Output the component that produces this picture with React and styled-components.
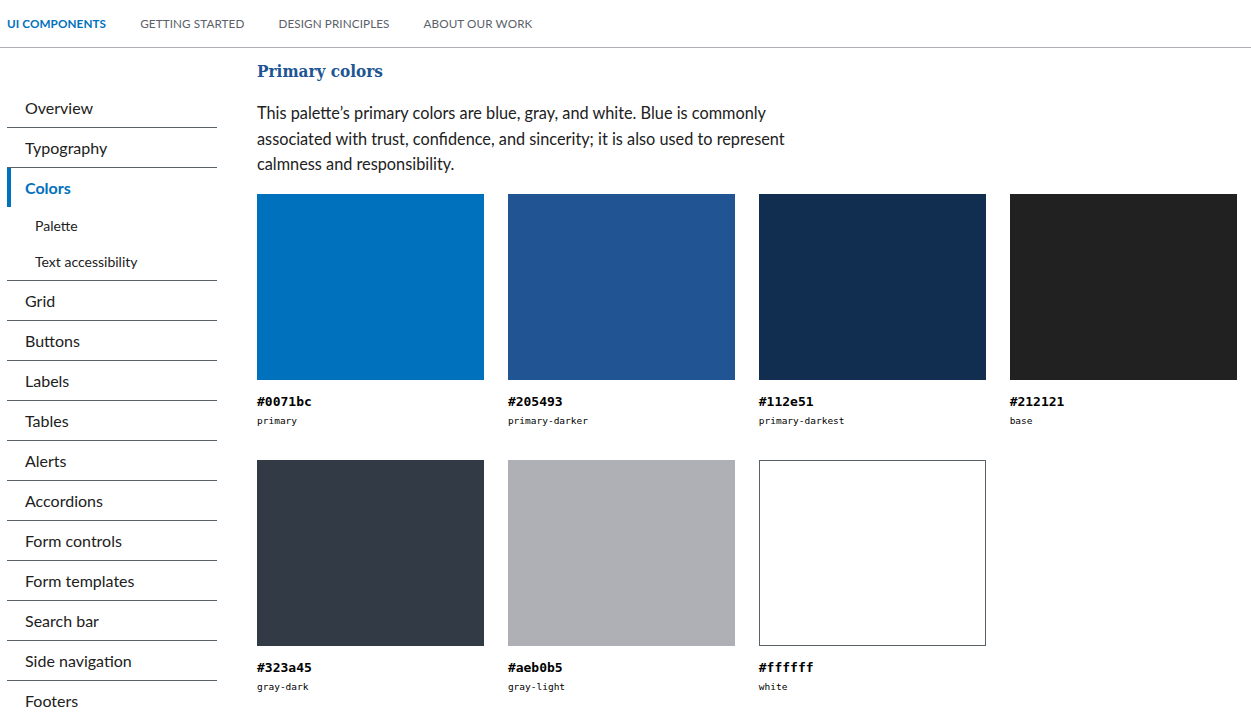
import React from "react";
import styled, { createGlobalStyle } from "styled-components";

const GlobalStyle = createGlobalStyle`
  * { box-sizing: border-box; }
  body {
    margin: 0;
    background: #fff;
    font-family: Lato, "Noto Sans", sans-serif;
    color: #212121;
  }
`;

const navLinks = ["UI COMPONENTS", "GETTING STARTED", "DESIGN PRINCIPLES", "ABOUT OUR WORK"];

const sideItems = [
    { label: "Overview" },
    { label: "Typography" },
    { label: "Colors", active: true, children: ["Palette", "Text accessibility"] },
    { label: "Grid" },
    { label: "Buttons" },
    { label: "Labels" },
    { label: "Tables" },
    { label: "Alerts" },
    { label: "Accordions" },
    { label: "Form controls" },
    { label: "Form templates" },
    { label: "Search bar" },
    { label: "Side navigation" },
    { label: "Footers" },
];

const swatches = [
    { hex: "#0071bc", name: "primary" },
    { hex: "#205493", name: "primary-darker" },
    { hex: "#112e51", name: "primary-darkest" },
    { hex: "#212121", name: "base" },
    { hex: "#323a45", name: "gray-dark" },
    { hex: "#aeb0b5", name: "gray-light" },
    { hex: "#ffffff", name: "white", outlined: true },
];

function App() {
    return (
        <>
            <GlobalStyle />
            <TopNav>
                {navLinks.map((link, i) => (
                    <NavLink key={link} $active={i === 0}>{link}</NavLink>
                ))}
            </TopNav>
            <Page>
                <SideNav>
                    {sideItems.map((item) => (
                        <SideItem key={item.label}>
                            <SideLink $active={item.active}>{item.label}</SideLink>
                            {item.children && (
                                <SubList>
                                    {item.children.map((c) => (
                                        <SubLink key={c}>{c}</SubLink>
                                    ))}
                                </SubList>
                            )}
                        </SideItem>
                    ))}
                </SideNav>
                <Main>
                    <Heading>Primary colors</Heading>
                    <Intro>
                        This palette’s primary colors are blue, gray, and white. Blue is commonly
                        associated with trust, confidence, and sincerity; it is also used to represent
                        calmness and responsibility.
                    </Intro>
                    <SwatchGrid>
                        {swatches.map((s) => (
                            <Swatch key={s.hex}>
                                <Chip $color={s.hex} $outlined={s.outlined} />
                                <Hex>{s.hex}</Hex>
                                <Name>{s.name}</Name>
                            </Swatch>
                        ))}
                    </SwatchGrid>
                </Main>
            </Page>
        </>
    );
}

const TopNav = styled.nav`
  height: 48px;
  display: flex;
  align-items: center;
  gap: 34px;
  padding: 0 7px 1px;
  border-bottom: 1px solid #aeb0b5;
`;

const NavLink = styled.a`
  font-family: Lato, "Noto Sans", sans-serif;
  font-size: 11.7px;
  font-weight: ${(p) => (p.$active ? 700 : 400)};
  color: ${(p) => (p.$active ? "#0071bc" : "#5b616b")};
  letter-spacing: 0.1px;
  cursor: pointer;
`;

const Page = styled.div`
  display: flex;
  gap: 40px;
  padding-left: 7px;
`;

const SideNav = styled.ul`
  list-style: none;
  margin: 40px 0 0;
  padding: 0;
  width: 210px;
  flex-shrink: 0;
`;

const SideItem = styled.li`
  border-top: 1px solid #5b616b;
  &:first-child { border-top: none; }
`;

const SideLink = styled.a`
  display: block;
  height: 39px;
  line-height: 40px;
  padding-left: ${(p) => (p.$active ? "14px" : "18px")};
  border-left: ${(p) => (p.$active ? "4px solid #0071bc" : "none")};
  font-size: 16px;
  font-weight: ${(p) => (p.$active ? 700 : 400)};
  color: ${(p) => (p.$active ? "#0071bc" : "#212121")};
`;

const SubList = styled.div`
  display: flex;
  flex-direction: column;
  padding-bottom: 1px;
`;

const SubLink = styled.a`
  display: block;
  height: 36px;
  line-height: 37px;
  padding-left: 28px;
  font-size: 14px;
  color: #212121;
`;

const Main = styled.main`
  width: 980px;
  padding-top: 11px;
`;

const Heading = styled.h2`
  margin: 0;
  font-family: "DejaVu Serif Condensed", "DejaVu Serif", serif;
  font-size: 17px;
  font-weight: 700;
  color: #205493;
  line-height: 24px;
`;

const Intro = styled.p`
  margin: 17px 0 0;
  max-width: 540px;
  font-size: 16.3px;
  line-height: 25.5px;
  color: #212121;
`;

const SwatchGrid = styled.div`
  display: grid;
  grid-template-columns: repeat(4, 1fr);
  column-gap: 23.5px;
  row-gap: 33px;
  margin-top: 17px;
`;

const Swatch = styled.div`
  display: flex;
  flex-direction: column;
`;

const Chip = styled.div`
  height: 186px;
  background: ${(p) => p.$color};
  border: ${(p) => (p.$outlined ? "1px solid #5b616b" : "none")};
`;

const Hex = styled.div`
  margin-top: 14px;
  font-family: "DejaVu Sans Mono", monospace;
  font-size: 13px;
  font-weight: 700;
  line-height: 16px;
  color: #000;
`;

const Name = styled.div`
  margin-top: 5px;
  font-family: "DejaVu Sans Mono", monospace;
  font-size: 9.5px;
  line-height: 12px;
  color: #000;
`;

export default App;
